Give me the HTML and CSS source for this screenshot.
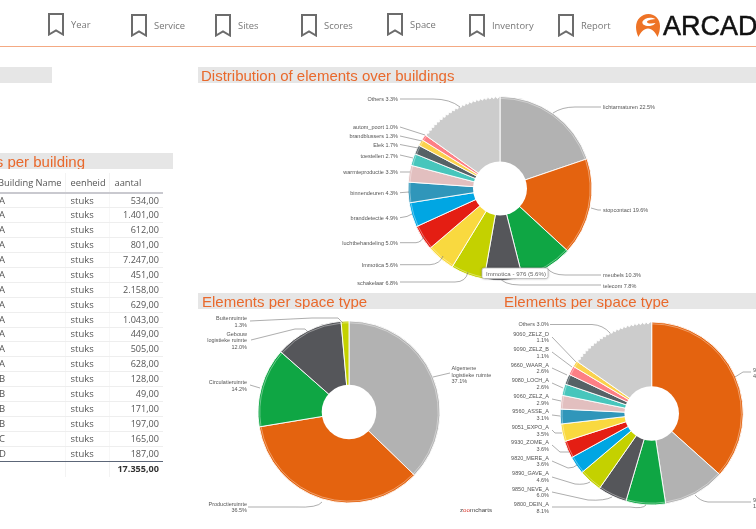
FILE: index.html
```html
<!DOCTYPE html>
<html lang="nl">
<head>
<meta charset="utf-8">
<title>Elements dashboard</title>
<link rel="stylesheet" href="styles.css">
</head>
<body>
<header class="topbar">
  <nav class="nav">
    <a class="nav-item nav-item--up"><svg class="bookmark" viewBox="0 0 16 23"><path d="M1 1H15V21.5L8 17.5L1 21.5Z"/></svg><span>Year</span></a>
    <a class="nav-item"><svg class="bookmark" viewBox="0 0 16 23"><path d="M1 1H15V21.5L8 17.5L1 21.5Z"/></svg><span>Service</span></a>
    <a class="nav-item"><svg class="bookmark" viewBox="0 0 16 23"><path d="M1 1H15V21.5L8 17.5L1 21.5Z"/></svg><span>Sites</span></a>
    <a class="nav-item"><svg class="bookmark" viewBox="0 0 16 23"><path d="M1 1H15V21.5L8 17.5L1 21.5Z"/></svg><span>Scores</span></a>
    <a class="nav-item nav-item--up"><svg class="bookmark" viewBox="0 0 16 23"><path d="M1 1H15V21.5L8 17.5L1 21.5Z"/></svg><span>Space</span></a>
    <a class="nav-item"><svg class="bookmark" viewBox="0 0 16 23"><path d="M1 1H15V21.5L8 17.5L1 21.5Z"/></svg><span>Inventory</span></a>
    <a class="nav-item"><svg class="bookmark" viewBox="0 0 16 23"><path d="M1 1H15V21.5L8 17.5L1 21.5Z"/></svg><span>Report</span></a>
  </nav>
  <div class="logo">
    <svg class="logo-mark" viewBox="0 0 24 23">
      <path class="logo-fill" d="M12.5 0C19 0 24 5 24 12C24 16 23 20 21.5 23C19.500 18.500 16 14.500 12 14.500C8 14.500 4.500 18.500 2.500 23C1 20 0 16.500 0 13C0 5.500 5.500 0 12.500 0Z"/>
      <path class="logo-swirl" d="M19.500 5C15 2.500 8.500 3.500 6.500 7.500C5.500 10.500 9.500 12.500 14 12C16.500 11.700 18.500 10.500 19.500 9C16 9.700 11.500 9.800 11 8C10.800 6.800 14.500 5.300 19.500 5Z"/>
    </svg>
    <span class="logo-text">ARCADIS</span>
  </div>
</header>

<main class="content">
  <section class="left">
    <h2 class="bar bar--short"></h2>
    <h2 class="bar bar--table"><span>Elements per building</span></h2>
    <table class="data">
      <thead><tr><th>Building Name</th><th>eenheid</th><th>aantal</th></tr></thead>
      <tbody>
        <tr><td>A</td><td>stuks</td><td>534,00</td></tr>
        <tr><td>A</td><td>stuks</td><td>1.401,00</td></tr>
        <tr><td>A</td><td>stuks</td><td>612,00</td></tr>
        <tr><td>A</td><td>stuks</td><td>801,00</td></tr>
        <tr><td>A</td><td>stuks</td><td>7.247,00</td></tr>
        <tr><td>A</td><td>stuks</td><td>451,00</td></tr>
        <tr><td>A</td><td>stuks</td><td>2.158,00</td></tr>
        <tr><td>A</td><td>stuks</td><td>629,00</td></tr>
        <tr><td>A</td><td>stuks</td><td>1.043,00</td></tr>
        <tr><td>A</td><td>stuks</td><td>449,00</td></tr>
        <tr><td>A</td><td>stuks</td><td>505,00</td></tr>
        <tr><td>A</td><td>stuks</td><td>628,00</td></tr>
        <tr><td>B</td><td>stuks</td><td>128,00</td></tr>
        <tr><td>B</td><td>stuks</td><td>49,00</td></tr>
        <tr><td>B</td><td>stuks</td><td>171,00</td></tr>
        <tr><td>B</td><td>stuks</td><td>197,00</td></tr>
        <tr><td>C</td><td>stuks</td><td>165,00</td></tr>
        <tr><td>D</td><td>stuks</td><td>187,00</td></tr>
      </tbody>
      <tfoot><tr><td></td><td></td><td>17.355,00</td></tr></tfoot>
    </table>
  </section>

  <section class="right">
    <h2 class="bar"><span>Distribution of elements over buildings</span></h2>
    <svg class="chart chart--top" viewBox="198 83 558 210">
      <g class="pie" data-cx="500" data-cy="188.500" data-r="92" data-hole="27" data-ends="71.200:a,132.700:b,165.800:c,190:d,211.400:e,229.500:f,245.500:g,261:h,274:i,284.600:j,292.200:k,298:l,302:m,305.600:n,360:saw"></g>
      <path class="lead" d="M400 99H433Q450 99 460 107M400 127L425 135M400 136L422 141M400 144.500L418 148M400 155L413 158M400 172H410M400 192.700L409 192M400 217.700Q408 217 412 214M400 242.700H416Q422 242 424 236M400 264.700H430Q440 264 443 256M400 282H455Q466 282 468 272M601 107H575Q562 107 553 113M601 210H598L591 208M601 275H565Q552 275 547 268M601 285H520Q503 285 498 276"/>
      <g class="labels labels--end">
        <text x="398" y="101">Others 3.3%</text>
        <text x="398" y="129">autom_poort 1.0%</text>
        <text x="398" y="138">brandblussers 1.3%</text>
        <text x="398" y="146.500">Elek 1.7%</text>
        <text x="398" y="157.500">toestellen 2.7%</text>
        <text x="398" y="174">warmteproductie 3.3%</text>
        <text x="398" y="195">binnendeuren 4.3%</text>
        <text x="398" y="220">branddetectie 4.9%</text>
        <text x="398" y="245">luchtbehandeling 5.0%</text>
        <text x="398" y="267">Immotica 5.6%</text>
        <text x="398" y="284.500">schakelaar 6.8%</text>
      </g>
      <g class="labels">
        <text x="603" y="109">lichtarmaturen 22.5%</text>
        <text x="603" y="212">stopcontact 19.6%</text>
        <text x="603" y="277">meubels 10.3%</text>
        <text x="603" y="287.500">telecom 7.8%</text>
      </g>
      <rect class="tip-box" x="482" y="268" width="66" height="10.500" rx="2"/>
      <text class="tip-text" x="486" y="275.500">Immotica - 976 (5.6%)</text>
    </svg>

    <div class="pair">
      <div class="pair-cell">
        <h2 class="bar bar--pair"><span>Elements per space type</span></h2>
        <svg class="chart chart--left" viewBox="198 309 297 220">
          <g class="pie" data-cx="349" data-cy="412" data-r="91" data-hole="27.300" data-ends="134:a,260.600:b,311.400:c,355:d,360:e"></g>
          <path class="lead" d="M250 321L312 318H338L343 323M251 340L295 329H305L308 332M250 385L260 388M248 507H295Q318 508 322 502M450 373L433 377"/>
          <g class="labels labels--end">
            <text x="247" y="320">Buitenruimte</text>
            <text x="247" y="326.500">1.3%</text>
            <text x="247" y="335.500">Gebouw</text>
            <text x="247" y="342">logistieke ruimte</text>
            <text x="247" y="349">12.0%</text>
            <text x="247" y="384">Circulatieruimte</text>
            <text x="247" y="391">14.2%</text>
            <text x="247" y="505.500">Productieruimte</text>
            <text x="247" y="512">36.5%</text>
          </g>
          <g class="labels">
            <text x="451.500" y="370">Algemene</text>
            <text x="451.500" y="376.500">logistieke ruimte</text>
            <text x="451.500" y="383">37.1%</text>
          </g>
          <text class="brand" x="460" y="511.500">z<tspan class="brand-accent">oo</tspan>mcharts</text>
        </svg>
      </div>
      <div class="pair-cell">
        <h2 class="bar bar--pair-end"><span>Elements per space type</span></h2>
        <svg class="chart chart--right" viewBox="495 309 261 220">
          <g class="pie" data-cx="651.700" data-cy="413.500" data-r="91.500" data-hole="27.300" data-ends="131.900:b,171.200:a,196.400:c,214.900:d,229.800:e,241.200:h,252.200:g,263.400:f,272.800:i,281.500:j,288.800:k,295.300:l,301:n,304.900:m,360:saw"></g>
          <path class="lead" d="M550 324.500H592Q603 325 610 333M552 337L576 362M552 352L572 367M552 368L567 375M552 383L563 388M552 399L561 401M552 415L560 416M552 430L555 433H562M552 445L560 452H569M552 461L568 468Q574 468 577 465M552 477L575 484Q585 485 590 482M552 492L588 500Q605 501 612 497M552 507H630Q643 509 646 505M751 372H743L735 377M751 502H708Q700 501 695 495"/>
          <g class="labels labels--end">
            <text x="549" y="326">Others 3.0%</text>
            <text x="549" y="335.500">9060_ZELZ_D</text>
            <text x="549" y="342">1.1%</text>
            <text x="549" y="351">9090_ZELZ_B</text>
            <text x="549" y="358">1.1%</text>
            <text x="549" y="366.500">9660_WAAR_A</text>
            <text x="549" y="373">2.6%</text>
            <text x="549" y="382">9080_LOCH_A</text>
            <text x="549" y="389">2.6%</text>
            <text x="549" y="398">9060_ZELZ_A</text>
            <text x="549" y="404.500">2.9%</text>
            <text x="549" y="413">9560_ASSE_A</text>
            <text x="549" y="420">3.1%</text>
            <text x="549" y="429">9051_EXPO_A</text>
            <text x="549" y="435.500">3.5%</text>
            <text x="549" y="444">9930_ZOME_A</text>
            <text x="549" y="451">3.6%</text>
            <text x="549" y="459.500">9820_MERE_A</text>
            <text x="549" y="466">3.6%</text>
            <text x="549" y="475">9890_GAVE_A</text>
            <text x="549" y="482">4.6%</text>
            <text x="549" y="490.500">9850_NEVE_A</text>
            <text x="549" y="497">6.0%</text>
            <text x="549" y="506">9800_DEIN_A</text>
            <text x="549" y="512.500">8.1%</text>
          </g>
          <g class="labels">
            <text x="753" y="371.500">9000_GENT_A</text>
            <text x="753" y="378">40.5%</text>
            <text x="753" y="501.500">9000_HOOF_A</text>
            <text x="753" y="508">10.9%</text>
          </g>
        </svg>
      </div>
    </div>
  </section>
</main>
<script src="pies.js"></script>
</body>
</html>
```
FILE: styles.css
```css
* { box-sizing: border-box; }
html, body { margin: 0; padding: 0; background: #fff; }
body { width: 756px; height: 529px; overflow: hidden; font-family: "Open Sans", "Liberation Sans", sans-serif; filter: blur(0.300px); }

.topbar { display: flex; height: 47px; border-bottom: 1px solid #f4a983; overflow: hidden; }
.nav { display: grid; grid-template-columns: 83px 84px 86px 86px 82px 89px 78px; padding-left: 48px; flex: none; width: 636px; }
.nav-item { display: flex; align-items: flex-start; gap: 7px; padding-top: 14px; font-size: 9.400px; color: #777; }
.nav-item--up { padding-top: 13px; }
.nav-item span { line-height: 22px; margin-top: 1px; }
.bookmark { width: 16px; height: 23px; flex: none; }
.bookmark path { fill: none; stroke: #6c6c6c; stroke-width: 2; }

.logo { display: flex; align-items: flex-start; gap: 3px; padding-top: 14px; flex: none; width: 120px; overflow: hidden; }
.logo-mark { width: 24px; height: 23px; flex: none; }
.logo-fill { fill: #ee7326; }
.logo-swirl { fill: #fff; }
.logo-text { margin-top: 1px; font-family: "Liberation Sans", Arial, sans-serif; font-size: 27px; line-height: 23px; color: #111; -webkit-text-stroke: 0.500px #111; white-space: nowrap; }

.content { display: grid; grid-template-columns: 198px 558px; padding-top: 20px; }
.bar { display: flex; height: 16px; margin: 0; background: #e6e6e6; color: #e9692c; font: 400 15px/17px "Liberation Sans", Arial, sans-serif; white-space: nowrap; overflow: hidden; padding-left: 3px; }
.bar--short { width: 52px; margin-bottom: 70px; }
.bar--table { width: 173px; justify-content: flex-end; padding: 0 88px 0 0; }
.bar--table span { flex: none; }
.bar--pair { padding-left: 4px; }
.bar--pair-end { padding-left: 9px; }

.data { width: 166px; margin: 4px 0 0 -3px; border-collapse: collapse; table-layout: fixed; font-size: 9.500px; color: #555; }
.data th:nth-child(1), .data td:nth-child(1) { width: 68px; }
.data th:nth-child(2), .data td:nth-child(2) { width: 44px; }
.data th { height: 20px; padding: 0 0 0 5px; font-size: 9.300px; font-weight: 400; text-align: left; white-space: nowrap; border-bottom: 2px solid #c9c9cf; border-right: 1px solid #f3f3f3; }
.data th:nth-child(1) { padding-left: 1px; }
.data th:last-child { border-right: 0; }
.data td { height: 14.900px; padding: 0 0 0 5px; border-bottom: 1px solid #eeeeee; line-height: 12px; }
.data td:nth-child(1) { padding-left: 2px; }
.data td:nth-child(3) { font-size: 9.100px; text-align: right; padding: 0 4px 0 0; }
.data tbody td:nth-child(2) { border-right: 1px solid #f7f7f7; }
.data tbody td:nth-child(1) { border-right: 1px solid #f7f7f7; }
.data tbody tr:last-child td { border-bottom: 1px solid #5c6678; }
.data tfoot td { height: 16px; border-bottom: 0; border-right: 1px solid #f3f3f3; font-weight: 700; color: #333; }
.data tfoot td:last-child { border-right: 0; }

.pair { display: grid; grid-template-columns: 297px 261px; }
.chart { display: block; }
.chart--top { width: 558px; height: 210px; }
.chart--left { width: 297px; height: 220px; }
.chart--right { width: 261px; height: 220px; }

.slice-a { fill: #b2b2b2; }
.slice-b { fill: #e4630f; }
.slice-c { fill: #0fa644; }
.slice-d { fill: #55565a; }
.slice-e { fill: #c4d100; }
.slice-f { fill: #f9d93f; }
.slice-g { fill: #e41e13; }
.slice-h { fill: #00a6e3; }
.slice-i { fill: #3096ba; }
.slice-j { fill: #e2bfbf; }
.slice-k { fill: #47c6bc; }
.slice-l { fill: #566266; }
.slice-m { fill: #fad24d; }
.slice-n { fill: #fd7f85; }
.slice-saw { fill: #cccccc; }
.slice { stroke: #fff; stroke-width: 0.900; stroke-linejoin: round; }
.slice-ring { fill: none; stroke: #fff; stroke-opacity: 0.550; stroke-width: 0.700; }
.hole { fill: #fff; }

.lead { fill: none; stroke: #777; stroke-width: 0.600; }
.labels text { font: 5.500px "Liberation Sans", Arial, sans-serif; fill: #555; }
.labels--end text { text-anchor: end; }
.tip-box { fill: #fff; stroke: #bbb; stroke-width: 0.800; filter: drop-shadow(0 0.500px 1px rgba(0,0,0,.3)); }
.tip-text { font: 6.100px "Liberation Sans", Arial, sans-serif; fill: #666; }
.brand { font: 6.200px "Liberation Sans", Arial, sans-serif; fill: #444; }
.brand-accent { fill: #d9352a; }
```
FILE: pies.js
```js
// Draws each donut from its list of "end angle:colour key" pairs.
var NS = "http://www.w3.org/2000/svg";

function point(cx, cy, r, deg) {
  var a = deg * Math.PI / 180;
  return (cx + r * Math.sin(a)).toFixed(2) + " " + (cy - r * Math.cos(a)).toFixed(2);
}

function add(group, name, attrs) {
  var el = document.createElementNS(NS, name);
  Object.keys(attrs).forEach(function (k) { el.setAttribute(k, attrs[k]); });
  group.appendChild(el);
}

document.querySelectorAll(".pie").forEach(function (group) {
  var cx = +group.dataset.cx, cy = +group.dataset.cy, r = +group.dataset.r, hole = +group.dataset.hole;
  var start = 0;
  group.dataset.ends.split(",").forEach(function (part) {
    var bits = part.split(":"), end = +bits[0], key = bits[1], d;
    var large = end - start > 180 ? 1 : 0;
    if (key === "saw") {
      d = "M" + point(cx, cy, hole - 2, start);
      for (var t = start, i = 0; t < end; t += 1.200, i++) {
        d += "L" + point(cx, cy, i % 2 ? r : r - 2, t);
      }
      d += "L" + point(cx, cy, r, end) + "L" + point(cx, cy, hole - 2, end) + "Z";
    } else {
      d = "M" + point(cx, cy, hole - 2, start) + "L" + point(cx, cy, r, start) +
          "A" + r + " " + r + " 0 " + large + " 1 " + point(cx, cy, r, end) +
          "L" + point(cx, cy, hole - 2, end) + "Z";
    }
    add(group, "path", { "class": "slice slice-" + key, d: d });
    if (key !== "saw") {
      var rr = r - 1.800;
      add(group, "path", {
        "class": "slice-ring",
        d: "M" + point(cx, cy, rr, start) + "A" + rr + " " + rr + " 0 " + large + " 1 " + point(cx, cy, rr, end)
      });
    }
    start = end;
  });
  add(group, "circle", { "class": "hole", cx: cx, cy: cy, r: hole });
});
```
